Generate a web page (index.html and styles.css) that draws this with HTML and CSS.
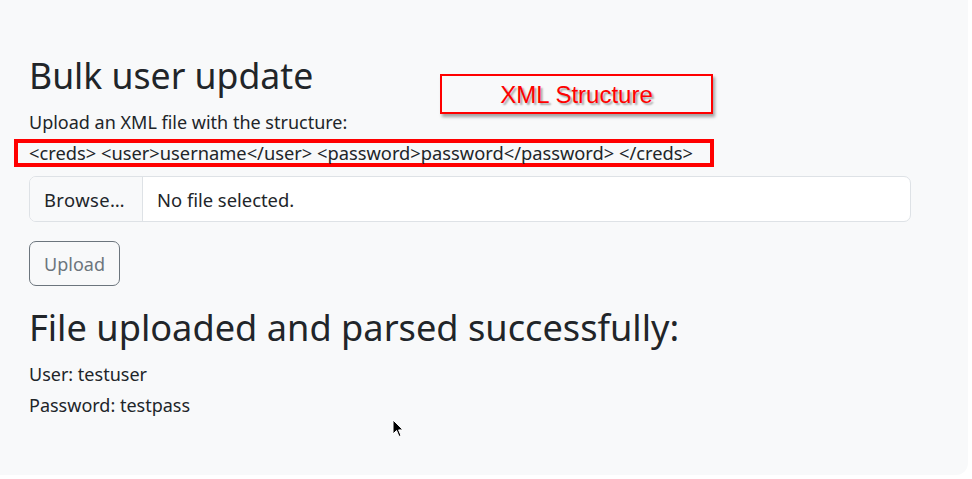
FILE: index.html
```html
<!DOCTYPE html>
<html lang="en">
<head>
<meta charset="utf-8">
<title>Bulk user update</title>
<link rel="stylesheet" href="styles.css">
</head>
<body>
<div class="panel">
  <div class="content">
    <h1 class="title">Bulk user update</h1>
    <div class="callout">XML Structure</div>
    <form class="upload-form">
      <label class="form-label">Upload an XML file with the structure:</label>
      <div class="structure">&lt;creds&gt; &lt;user&gt;username&lt;/user&gt; &lt;password&gt;password&lt;/password&gt; &lt;/creds&gt;</div>
      <div class="file-input">
        <span class="file-btn">Browse…</span>
        <span class="file-name">No file selected.</span>
      </div>
      <button type="button" class="btn-upload">Upload</button>
    </form>
    <h2 class="result-title">File uploaded and parsed successfully:</h2>
    <div class="result">
      <div class="result-line">User: testuser</div>
      <div class="result-line">Password: testpass</div>
    </div>
  </div>
  <svg class="cursor" width="12" height="20" viewBox="0 0 12 20">
    <path d="M1 1 L1 15 L4.5 11.5 L7 17.5 L9 16.6 L6.6 10.9 L11 10.9 Z" fill="#000" stroke="#fff" stroke-width="1"/>
  </svg>
</div>
</body>
</html>
```
FILE: styles.css
```css
* { box-sizing: border-box; }
body {
  margin: 0;
  background: #fff;
  font-family: "Noto Sans", "DejaVu Sans", sans-serif;
  color: #212529;
}
.panel {
  position: relative;
  width: 968px;
  height: 475px;
  background: #f8f9fa;
  border-bottom-right-radius: 12px;
  padding: 54px 57px 0 29px;
}
.content { display: flex; flex-direction: column; align-items: flex-start; }
.title {
  margin: 0 0 13px 0;
  font-size: 35.6px;
  font-weight: 400;
  line-height: 43px;
}
.callout {
  position: absolute;
  left: 440px;
  top: 74px;
  width: 273px;
  height: 40px;
  border: 2px solid #ff0000;
  box-shadow: 2px 3px 3px rgba(0,0,0,0.35);
  color: #ff0000;
  font-family: "Liberation Sans", Arial, sans-serif;
  font-size: 24px;
  display: flex;
  align-items: center;
  justify-content: center;
  padding-top: 1px;
  text-shadow: 2px 2px 2px rgba(0,0,0,0.35);
  background: #f8f9fa;
}
.upload-form { display: flex; flex-direction: column; align-items: flex-start; width: 882px; }
.form-label { font-size: 18px; line-height: 24px; }
.structure {
  margin-left: -15px;
  margin-top: 5px;
  border: 4px solid #ff0000;
  padding: 0 17px 0 11px;
  font-size: 18.3px;
  line-height: 20px;
  white-space: nowrap;
}
.file-input {
  margin-top: 9px;
  width: 882px;
  height: 46px;
  display: flex;
  border: 1px solid #dee2e6;
  border-radius: 7px;
  overflow: hidden;
  background: #fff;
  font-size: 18.4px;
}
.file-btn {
  background: #f8f9fa;
  border-right: 1px solid #dee2e6;
  padding: 0 0 0 14px;
  display: flex;
  align-items: center;
  width: 113px;
  flex: none;
  letter-spacing: 0.4px;
}
.file-name { padding: 0 14px; display: flex; align-items: center; }
.btn-upload {
  margin-top: 19px;
  width: 91px;
  height: 45px;
  border: 1px solid #6c757d;
  border-radius: 7px;
  background: transparent;
  color: #6c757d;
  font-family: inherit;
  font-size: 18px;
  padding: 0 14px;
}
.result-title {
  margin: 20px 0 10px 0;
  font-size: 36.2px;
  font-weight: 400;
  line-height: 43px;
}
.result-line { font-size: 18px; line-height: 31px; }
.cursor { position: absolute; left: 392px; top: 419px; }
```
